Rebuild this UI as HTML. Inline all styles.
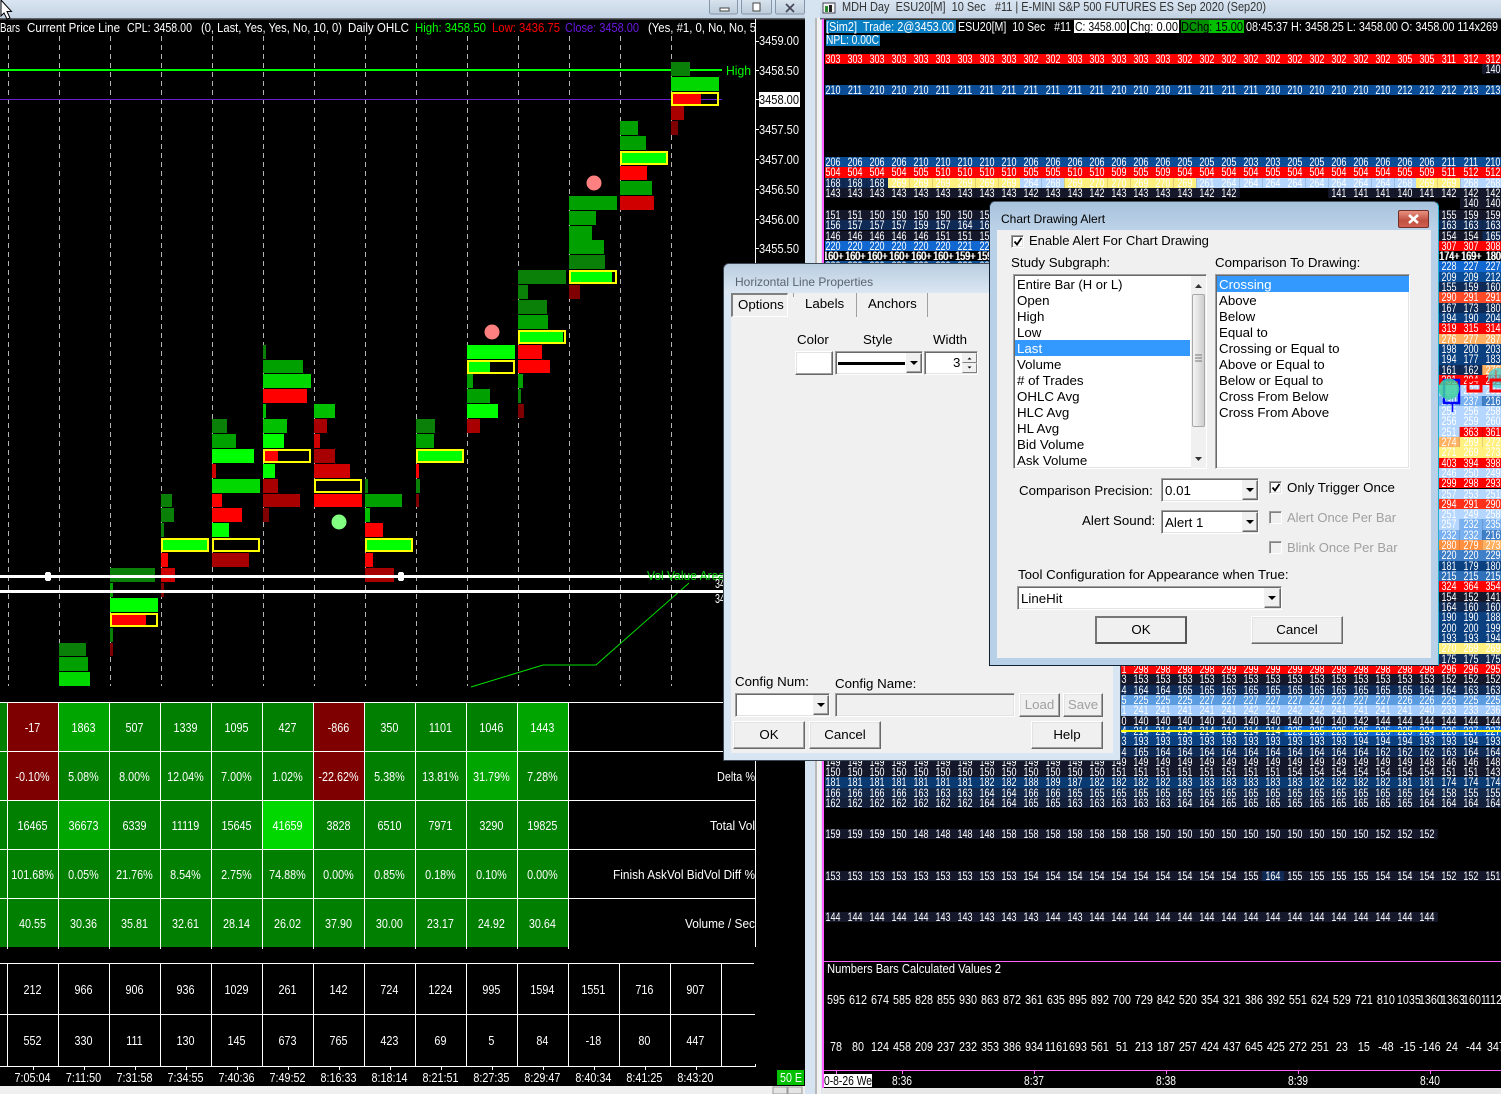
<!DOCTYPE html>
<html><head><meta charset="utf-8"><title>Chart</title>
<style>
html,body{margin:0;padding:0;background:#000}
body{position:relative;width:1501px;height:1094px;overflow:hidden;font-family:"Liberation Sans",sans-serif;color:#000}
div,svg{position:absolute}
svg.a{left:0;top:0}
svg text{font-family:"Liberation Sans",sans-serif;font-size:13px;fill:#fff;white-space:pre}
.r{display:flex;height:10.32px;line-height:11px;font-size:12px;white-space:nowrap;transform:scaleX(.75);transform-origin:0 0;color:#fff}
.r b{font-weight:400;flex:none;width:29.33px;text-align:center}
.n{background:#14182a}.m{background:#0f2a55}.u{background:#0a3f80}.e{background:#0a4d96}.f{background:#1068d0}
.R{background:#ff0000}.p{background:#ff4a28}.o{background:#ffb060}.O{background:#ff9040}.y{background:#fff080}.l{background:#b4d6ff}.s{background:#78b0f0}.w{background:#4080c8}.t7{background:#3070b8}.k{background:#000;text-shadow:1px 0 #fff}
.g{display:flex;transform:scaleX(.83);transform-origin:0 0;color:#fff;font-size:13px;line-height:14px;white-space:nowrap}
.g b{font-weight:400;flex:none;width:61.45px;text-align:center}
.h{display:flex;transform:scaleX(.83);transform-origin:0 0;color:#fff;font-size:13px;line-height:14px;white-space:nowrap}
.h b{font-weight:400;flex:none;width:26.5px;text-align:center}
.t{white-space:nowrap;font-size:13.3px;line-height:16px;color:#000;margin-top:1px}
.d{color:#a0a0a0}
.b{background:#f0f0f0;border:1px solid;border-color:#fff #696969 #696969 #fff;box-shadow:inset -1px -1px 0 #a0a0a0,inset 1px 1px 0 #e3e3e3;box-sizing:border-box;text-align:center;font-size:13.3px;line-height:26px}
.i{background:#fff;box-sizing:border-box;border:1px solid;border-color:#a0a0a0 #fff #fff #a0a0a0;box-shadow:inset 1px 1px 0 #696969,inset -1px -1px 0 #e3e3e3}
.c{background:#f0f0f0;box-sizing:border-box;border:1px solid;border-color:#f0f0f0 #696969 #696969 #f0f0f0;box-shadow:inset -1px -1px 0 #a0a0a0}
.c:after{content:"";position:absolute;left:3px;top:7px;border:4px solid transparent;border-top:4px solid #000;border-bottom:0}
.sp{background:#f0f0f0;box-sizing:border-box;border:1px solid;border-color:#f0f0f0 #808080 #808080 #f0f0f0}
</style></head><body>

<svg class="a" width="1501" height="1094" shape-rendering="crispEdges">
<defs>
<linearGradient id="tb" x1="0" y1="0" x2="0" y2="1"><stop offset="0" stop-color="#d9e5f1"/><stop offset="1" stop-color="#c3d3e3"/></linearGradient>
<linearGradient id="wb" x1="0" y1="0" x2="0" y2="1"><stop offset="0" stop-color="#dbe6f0"/><stop offset="1" stop-color="#bccbda"/></linearGradient>
</defs>
<rect x="0" y="0" width="820" height="18" fill="url(#tb)"/>
<rect x="0" y="18" width="805" height="1.5" fill="#606468"/>
<rect x="805" y="0" width="18" height="1094" fill="#d6e3f0"/>
<rect x="815" y="18" width="2" height="1076" fill="#b8b8b8"/>
<rect x="817" y="18" width="4" height="1076" fill="#f2f2f2"/>
<rect x="820" y="0" width="681" height="18" fill="url(#tb)"/>
<rect x="820" y="18" width="681" height="1.5" fill="#606468"/>
<rect x="709.5" y="-2" width="28" height="16" rx="2" fill="url(#wb)" stroke="#8496aa"/>
<rect x="741.5" y="-2" width="30" height="16" rx="2" fill="url(#wb)" stroke="#8496aa"/>
<rect x="775.5" y="-2" width="29" height="16" rx="2" fill="url(#wb)" stroke="#8496aa"/>
<rect x="720" y="8" width="9" height="3" fill="#fff" stroke="#444"/>
<rect x="753" y="3" width="7" height="8" fill="#fff" stroke="#444"/>
<path d="M786 4l8 8M794 4l-8 8" stroke="#445" stroke-width="1.6" shape-rendering="auto"/>
<rect x="823" y="3" width="12" height="10" fill="#f4f4f4" stroke="#445"/>
<rect x="825" y="6" width="3" height="6" fill="#2a8a2a"/><rect x="829" y="5" width="3" height="7" fill="#222"/>
<path stroke="#b4b4b4" stroke-dasharray="5 4" fill="none" d="M8.5 36V686M59.5 36V686M110.5 36V686M161.5 36V686M212.5 36V686M263.5 36V686M314.5 36V686M365.5 36V686M416.5 36V686M467.5 36V686M518.5 36V686M569.5 36V686M620.5 36V686M671.5 36V686"/>
<rect x="0" y="69" width="722" height="2" fill="#00ff00"/>
<rect x="0" y="99" width="722" height="1" fill="#6a20d0"/>
<path fill="#0a8008" d="M671 62h19v14h-19zM518 270h48v14h-48zM518 285h10v14h-10zM518 300h29v14h-29zM212 419h15v14h-15zM416 419h19v14h-19zM161 494h11v13h-11zM161 508h13v14h-13zM161 523h3v14h-3zM263 345h3v14h-3zM365 479h3v14h-3zM416 479h4v14h-4zM518 389h3v14h-3zM110 628h3v14h-3zM59 643h27v13h-27zM569 255h36v14h-36zM110 568h45v14h-45z"/>
<path fill="#00a000" d="M620 121h18v14h-18zM620 136h26v14h-26zM620 181h32v14h-32zM569 196h48v14h-48zM569 211h27v14h-27zM569 226h23v14h-23zM569 240h35v14h-35zM518 315h30v14h-30zM467 374h6v14h-6zM467 389h23v14h-23zM416 434h18v14h-18zM212 434h24v14h-24zM263 360h40v13h-40zM518 374h5v14h-5zM110 583h3v14h-3zM59 657h29v14h-29zM365 494h37v13h-37z"/>
<path fill="#00c000" d="M314 404h21v14h-21zM263 419h24v14h-24zM365 508h5v14h-5zM263 404h3v14h-3z"/>
<path fill="#00d800" d="M671 77h48v14h-48zM263 374h48v14h-48zM212 479h48v14h-48zM59 672h31v14h-31z"/>
<path fill="#00ff00" d="M467 345h48v14h-48zM467 404h31v14h-31zM263 434h21v14h-21zM212 449h42v14h-42zM263 464h12v14h-12zM212 523h17v14h-17zM110 598h48v14h-48z"/>
<path fill="#ff0000" d="M620 166h27v14h-27zM518 345h24v14h-24zM518 360h32v13h-32zM263 389h44v14h-44zM212 494h10v13h-10zM212 508h30v14h-30zM365 523h18v14h-18zM365 553h8v14h-8zM161 553h7v14h-7zM416 464h3v14h-3zM314 494h48v13h-48z"/>
<path fill="#d00000" d="M620 196h34v14h-34zM212 464h4v14h-4zM314 434h6v14h-6zM161 568h14v14h-14zM314 464h36v14h-36z"/>
<path fill="#a80000" d="M671 106h13v14h-13zM467 419h13v14h-13zM314 419h13v14h-13zM314 449h21v14h-21zM263 479h15v14h-15zM263 494h37v13h-37zM212 553h37v14h-37zM365 568h29v14h-29z"/>
<path fill="#7f0000" d="M671 121h7v14h-7zM569 285h11v14h-11zM518 404h6v14h-6zM416 494h3v13h-3zM263 508h6v14h-6zM161 583h3v14h-3zM110 643h3v13h-3z"/>
<path fill="#ff0000" d="M672 93h29v12h-29zM264 450h14v12h-14zM111 614h35v12h-35z"/>
<path fill="#00ff00" d="M621 152h46v12h-46zM570 271h42v12h-42zM519 331h44v12h-44zM468 361h22v12h-22zM417 450h46v12h-46zM366 539h46v12h-46zM162 539h46v12h-46z"/>
<g fill="none" stroke="#ffff00" stroke-width="2">
<rect x="672" y="93" width="46" height="12"/><rect x="621" y="152" width="46" height="12"/><rect x="570" y="271" width="46" height="12"/><rect x="519" y="331" width="46" height="12"/><rect x="468" y="361" width="46" height="12"/><rect x="417" y="450" width="46" height="12"/><rect x="366" y="539" width="46" height="12"/><rect x="315" y="480" width="46" height="12"/><rect x="264" y="450" width="46" height="12"/><rect x="213" y="539" width="46" height="12"/><rect x="162" y="539" width="46" height="12"/><rect x="111" y="614" width="46" height="12"/>
</g>
<g shape-rendering="auto">
<ellipse cx="594" cy="183" rx="7.5" ry="7.5" fill="#ff8080"/>
<ellipse cx="492" cy="332" rx="7.5" ry="7.5" fill="#ff8080"/>
<ellipse cx="339" cy="522" rx="7.5" ry="7.5" fill="#80ff80"/>
<polyline points="471,687 543,665 596,665 689,583" fill="none" stroke="#00e000" stroke-width="1"/>
</g>
<rect x="0" y="575" width="724" height="3" fill="#fff"/>
<rect x="0" y="590" width="724" height="3" fill="#fff"/>
<rect x="45" y="572" width="6" height="9" rx="2" fill="#fff"/>
<rect x="398" y="572" width="6" height="9" rx="2" fill="#fff"/>
<rect x="755" y="19" width="1" height="928" fill="#fff"/>
<path stroke="#fff" d="M756 41.5h3M756 70.5h3M756 99.5h3M756 129.5h3M756 159.5h3M756 189.5h3M756 219.5h3M756 248.5h3"/>
<rect x="759" y="92" width="41" height="15" fill="#fff"/>
<rect x="0" y="702" width="569" height="245" fill="#007f00"/>
<path fill="#7f0000" d="M8 703h50v48h-50zM314 703h50v48h-50zM8 752h50v48h-50zM314 752h50v48h-50z"/>
<path fill="#00a500" d="M59 703h50v48h-50zM518 703h50v48h-50zM467 752h50v48h-50zM59 801h50v48h-50z"/>
<path fill="#00d800" d="M263 801h50v48h-50z"/>
<path stroke="#fff" fill="none" d="M7.5 702V949M58.5 702V949M109.5 702V949M160.5 702V949M211.5 702V949M262.5 702V949M313.5 702V949M364.5 702V949M415.5 702V949M466.5 702V949M517.5 702V949M568.5 702V949M0 702.5H755M0 751.5H755M0 800.5H755M0 849.5H755M0 898.5H755"/>
<path stroke="#fff" fill="none" d="M7.5 963V1066M58.5 963V1066M109.5 963V1066M160.5 963V1066M211.5 963V1066M262.5 963V1066M313.5 963V1066M364.5 963V1066M415.5 963V1066M466.5 963V1066M517.5 963V1066M568.5 963V1066M619.5 963V1066M670.5 963V1066M721.5 963V1066M0 963.5H754M0 1014.5H755M0 1066.5H756M755.5 1064V1067M33.5 1067V1070M84.5 1067V1070M135.5 1067V1070M186.5 1067V1070M237.5 1067V1070M288.5 1067V1070M339.5 1067V1070M390.5 1067V1070M441.5 1067V1070M492.5 1067V1070M543.5 1067V1070M594.5 1067V1070M645.5 1067V1070M696.5 1067V1070"/>
<rect x="777" y="1070" width="27" height="15" fill="#00c000"/>
<rect x="0" y="1086" width="805" height="8" fill="#f0f0f0"/>
<rect x="773" y="1087" width="14" height="7" fill="#e4e4e4" stroke="#999"/><rect x="788" y="1087" width="14" height="7" fill="#e4e4e4" stroke="#999"/>
<rect x="822" y="19" width="2" height="1069" fill="#ff60ff"/>
<rect x="824" y="961" width="677" height="1" fill="#ff60ff"/>
<rect x="824" y="1070" width="677" height="1" fill="#ff60ff"/>
<path stroke="#ff60ff" d="M836.5 1071v3M902.5 1071v3M1034.5 1071v3M1166.5 1071v3M1298.5 1071v3M1430.5 1071v3"/>
<rect x="824" y="1074" width="48" height="13" fill="#fff"/>
<rect x="822" y="1088" width="679" height="6" fill="#e8e8e8"/>
<g shape-rendering="auto">
<text x="0" y="32" textLength="20" lengthAdjust="spacingAndGlyphs">Bars</text>
<text x="27" y="32" textLength="93" lengthAdjust="spacingAndGlyphs">Current Price Line</text>
<text x="127" y="32" textLength="65" lengthAdjust="spacingAndGlyphs">CPL: 3458.00</text>
<text x="201" y="32" textLength="141" lengthAdjust="spacingAndGlyphs">(0, Last, Yes, Yes, No, 10, 0)</text>
<text x="348" y="32" textLength="61" lengthAdjust="spacingAndGlyphs">Daily OHLC</text>
<text x="415" y="32" textLength="71" lengthAdjust="spacingAndGlyphs" style="fill:#00ff00">High: 3458.50</text>
<text x="492" y="32" textLength="68" lengthAdjust="spacingAndGlyphs" style="fill:#ff0000">Low: 3436.75</text>
<text x="565" y="32" textLength="74" lengthAdjust="spacingAndGlyphs" style="fill:#6a18e0">Close: 3458.00</text>
<text x="648" y="32" textLength="108" lengthAdjust="spacingAndGlyphs">(Yes, #1, 0, No, No, 5</text>
<text x="726" y="75" textLength="25" lengthAdjust="spacingAndGlyphs" style="fill:#00ff00">High</text>
<text x="759" y="45" textLength="40" lengthAdjust="spacingAndGlyphs">3459.00</text>
<text x="759" y="75" textLength="40" lengthAdjust="spacingAndGlyphs">3458.50</text>
<text x="759" y="104" textLength="40" lengthAdjust="spacingAndGlyphs" style="fill:#000">3458.00</text>
<text x="759" y="134" textLength="40" lengthAdjust="spacingAndGlyphs">3457.50</text>
<text x="759" y="164" textLength="40" lengthAdjust="spacingAndGlyphs">3457.00</text>
<text x="759" y="194" textLength="40" lengthAdjust="spacingAndGlyphs">3456.50</text>
<text x="759" y="224" textLength="40" lengthAdjust="spacingAndGlyphs">3456.00</text>
<text x="759" y="253" textLength="40" lengthAdjust="spacingAndGlyphs">3455.50</text>
<text x="647" y="580" textLength="78" lengthAdjust="spacingAndGlyphs" style="fill:#00d000">Vol Value Area</text>
<text x="715" y="588" textLength="10" lengthAdjust="spacingAndGlyphs">34</text>
<text x="715" y="603" textLength="10" lengthAdjust="spacingAndGlyphs">34</text>
<text x="717" y="781" textLength="38" lengthAdjust="spacingAndGlyphs">Delta %</text>
<text x="710" y="830" textLength="45" lengthAdjust="spacingAndGlyphs">Total Vol</text>
<text x="613" y="879" textLength="142" lengthAdjust="spacingAndGlyphs">Finish AskVol BidVol Diff %</text>
<text x="685" y="928" textLength="70" lengthAdjust="spacingAndGlyphs">Volume / Sec</text>
<text x="780" y="1082" textLength="22" lengthAdjust="spacingAndGlyphs">50 E</text>
<text x="827" y="973" textLength="174" lengthAdjust="spacingAndGlyphs">Numbers Bars Calculated Values 2</text>
<text x="824" y="1085" textLength="48" lengthAdjust="spacingAndGlyphs" style="fill:#000">0-8-26 We</text>
<text x="892" y="1085" textLength="20" lengthAdjust="spacingAndGlyphs">8:36</text>
<text x="1024" y="1085" textLength="20" lengthAdjust="spacingAndGlyphs">8:37</text>
<text x="1156" y="1085" textLength="20" lengthAdjust="spacingAndGlyphs">8:38</text>
<text x="1288" y="1085" textLength="20" lengthAdjust="spacingAndGlyphs">8:39</text>
<text x="1420" y="1085" textLength="20" lengthAdjust="spacingAndGlyphs">8:40</text>
<text x="842" y="11" textLength="424" lengthAdjust="spacingAndGlyphs" style="fill:#333">MDH Day  ESU20[M]  10 Sec   #11 | E-MINI S&amp;P 500 FUTURES ES Sep 2020 (Sep20)</text>
</g>
<rect x="826" y="20" width="130" height="13" fill="#0a7fc4"/>
<rect x="826" y="35" width="54" height="11" fill="#0a7fc4"/>
<rect x="1074" y="20" width="53" height="13" fill="#fff"/>
<rect x="1129" y="20" width="50" height="13" fill="#fff"/>
<rect x="1181" y="20" width="28" height="13" fill="#009000"/>
<rect x="1209" y="20" width="35" height="13" fill="#00c000"/>
<g shape-rendering="auto">
<text x="826" y="31" textLength="128" lengthAdjust="spacingAndGlyphs">[Sim2]  Trade: 2@3453.00</text>
<text x="958" y="31" textLength="113" lengthAdjust="spacingAndGlyphs">ESU20[M]  10 Sec   #11</text>
<text x="1075" y="31" textLength="51" lengthAdjust="spacingAndGlyphs" style="fill:#000">C: 3458.00</text>
<text x="1130" y="31" textLength="48" lengthAdjust="spacingAndGlyphs" style="fill:#000">Chg: 0.00</text>
<text x="1181" y="31" textLength="62" lengthAdjust="spacingAndGlyphs" style="fill:#000">DChg: 15.00</text>
<text x="1246" y="31" textLength="252" lengthAdjust="spacingAndGlyphs">08:45:37 H: 3458.25 L: 3458.00 O: 3458.00 114x269</text>
<text x="826" y="44" textLength="53" lengthAdjust="spacingAndGlyphs">NPL: 0.00C</text>
</g>
</svg>

<!-- table 1 text -->
<div class="g" style="left:7px;top:721px"><b>-17</b><b>1863</b><b>507</b><b>1339</b><b>1095</b><b>427</b><b>-866</b><b>350</b><b>1101</b><b>1046</b><b>1443</b></div>
<div class="g" style="left:7px;top:770px"><b>-0.10%</b><b>5.08%</b><b>8.00%</b><b>12.04%</b><b>7.00%</b><b>1.02%</b><b>-22.62%</b><b>5.38%</b><b>13.81%</b><b>31.79%</b><b>7.28%</b></div>
<div class="g" style="left:7px;top:819px"><b>16465</b><b>36673</b><b>6339</b><b>11119</b><b>15645</b><b>41659</b><b>3828</b><b>6510</b><b>7971</b><b>3290</b><b>19825</b></div>
<div class="g" style="left:7px;top:868px"><b>101.68%</b><b>0.05%</b><b>21.76%</b><b>8.54%</b><b>2.75%</b><b>74.88%</b><b>0.00%</b><b>0.85%</b><b>0.18%</b><b>0.10%</b><b>0.00%</b></div>
<div class="g" style="left:7px;top:917px"><b>40.55</b><b>30.36</b><b>35.81</b><b>32.61</b><b>28.14</b><b>26.02</b><b>37.90</b><b>30.00</b><b>23.17</b><b>24.92</b><b>30.64</b></div>
<!-- table 2 text -->
<div class="g" style="left:7px;top:983px"><b>212</b><b>966</b><b>906</b><b>936</b><b>1029</b><b>261</b><b>142</b><b>724</b><b>1224</b><b>995</b><b>1594</b><b>1551</b><b>716</b><b>907</b></div>
<div class="g" style="left:7px;top:1034px"><b>552</b><b>330</b><b>111</b><b>130</b><b>145</b><b>673</b><b>765</b><b>423</b><b>69</b><b>5</b><b>84</b><b>-18</b><b>80</b><b>447</b></div>
<div class="g" style="left:7px;top:1071px"><b>7:05:04</b><b>7:11:50</b><b>7:31:58</b><b>7:34:55</b><b>7:40:36</b><b>7:49:52</b><b>8:16:33</b><b>8:18:14</b><b>8:21:51</b><b>8:27:35</b><b>8:29:47</b><b>8:40:34</b><b>8:41:25</b><b>8:43:20</b></div>

<!-- right grid -->
<div style="left:825px;top:0;width:676px;height:1094px;overflow:hidden">
<div class="r R" style="left:-3px;top:53.5px"><b>303</b><b>303</b><b>303</b><b>303</b><b>303</b><b>303</b><b>303</b><b>303</b><b>303</b><b>302</b><b>302</b><b>303</b><b>303</b><b>303</b><b>303</b><b>303</b><b>302</b><b>302</b><b>302</b><b>302</b><b>302</b><b>302</b><b>302</b><b>302</b><b>302</b><b>302</b><b>305</b><b>305</b><b>311</b><b>312</b><b>312</b></div>
<div class="r n" style="left:657px;top:64px"><b>140</b></div>
<div class="r e" style="left:-3px;top:84.5px"><b>210</b><b>211</b><b>210</b><b>210</b><b>210</b><b>211</b><b>211</b><b>211</b><b>211</b><b>211</b><b>211</b><b>211</b><b>211</b><b>210</b><b>210</b><b>210</b><b>211</b><b>211</b><b>211</b><b>211</b><b>210</b><b>210</b><b>210</b><b>210</b><b>210</b><b>210</b><b>212</b><b>212</b><b>212</b><b>213</b><b>213</b></div>
<div class="r e" style="left:-3px;top:157px"><b>206</b><b>206</b><b>206</b><b>206</b><b>210</b><b>210</b><b>210</b><b>210</b><b>210</b><b>206</b><b>206</b><b>206</b><b>206</b><b>206</b><b>206</b><b>206</b><b>205</b><b>205</b><b>205</b><b>203</b><b>203</b><b>205</b><b>205</b><b>206</b><b>206</b><b>206</b><b>206</b><b>206</b><b>211</b><b>211</b><b>210</b></div>
<div class="r R" style="left:-3px;top:167.3px"><b>504</b><b>504</b><b>504</b><b>504</b><b>505</b><b>510</b><b>510</b><b>510</b><b>510</b><b>505</b><b>505</b><b>510</b><b>510</b><b>509</b><b>505</b><b>509</b><b>504</b><b>504</b><b>504</b><b>504</b><b>505</b><b>504</b><b>504</b><b>504</b><b>504</b><b>504</b><b>505</b><b>509</b><b>511</b><b>512</b><b>512</b></div>
<div class="r" style="left:-3px;top:177.6px"><b class="m">168</b><b class="m">168</b><b class="m">168</b><b class="y">269</b><b class="y">269</b><b class="y">269</b><b class="y">269</b><b class="y">269</b><b class="y">269</b><b class="l">264</b><b class="l">268</b><b class="y">269</b><b class="y">270</b><b class="y">270</b><b class="y">269</b><b class="y">270</b><b class="y">269</b><b class="l">261</b><b class="l">264</b><b class="l">264</b><b class="l">264</b><b class="l">264</b><b class="l">264</b><b class="l">264</b><b class="l">264</b><b class="l">264</b><b class="l">268</b><b class="y">269</b><b class="y">269</b><b class="l">268</b><b class="l">268</b></div>
<div class="r" style="left:-3px;top:187.9px"><b class="n">143</b><b class="n">143</b><b class="n">143</b><b class="n">143</b><b class="n">143</b><b class="n">143</b><b class="n">143</b><b class="n">143</b><b class="n">143</b><b class="n">142</b><b class="n">143</b><b class="n">143</b><b class="n">142</b><b class="n">143</b><b class="n">143</b><b class="n">143</b><b class="n">143</b><b class="n">142</b><b class="n">142</b><b></b><b></b><b></b><b></b><b class="n">141</b><b class="n">141</b><b class="n">141</b><b class="n">140</b><b class="n">141</b><b class="n">142</b><b class="n">142</b><b class="n">142</b></div>
<div class="r n" style="left:635px;top:198.2px"><b>140</b><b>140</b></div>

<div class="r n" style="left:-3px;top:209.8px"><b>151</b><b>151</b><b>150</b><b>150</b><b>150</b><b>150</b><b>150</b><b>151</b></div>
<div class="r m" style="left:-3px;top:220.1px"><b>156</b><b>157</b><b>157</b><b>157</b><b>159</b><b>157</b><b>164</b><b>164</b></div>
<div class="r n" style="left:-3px;top:230.5px"><b>146</b><b>146</b><b>146</b><b>146</b><b>146</b><b>151</b><b>151</b><b>154</b></div>
<div class="r f" style="left:-3px;top:240.8px"><b>220</b><b>220</b><b>220</b><b>220</b><b>220</b><b>220</b><b>221</b><b>221</b></div>
<div class="r k" style="left:-3px;top:251.1px"><b>160+</b><b>160+</b><b>160+</b><b>160+</b><b>160+</b><b>160+</b><b>159+</b><b>159+</b></div>
<div class="r e" style="left:-3px;top:261.4px"><b>220</b><b>220</b><b>220</b><b>220</b><b>220</b><b>220</b><b>220</b><b>220</b></div>

<div class="r" style="left:613px;top:209.8px"><b class="n">155</b><b class="n">159</b><b class="n">159</b></div>
<div class="r" style="left:613px;top:220.1px"><b class="m">163</b><b class="m">163</b><b class="m">163</b></div>
<div class="r" style="left:613px;top:230.5px"><b class="n">154</b><b class="n">154</b><b class="m">165</b></div>
<div class="r R" style="left:613px;top:240.8px"><b>307</b><b>307</b><b>308</b></div>
<div class="r k" style="left:613px;top:251.1px"><b>174+</b><b>169+</b><b>180</b></div>
<div class="r f" style="left:613px;top:261.4px"><b>228</b><b>227</b><b>227</b></div>
<div class="r e" style="left:613px;top:271.7px"><b>209</b><b>209</b><b>212</b></div>
<div class="r m" style="left:613px;top:282.1px"><b>155</b><b>159</b><b>160</b></div>
<div class="r p" style="left:613px;top:292.4px"><b>290</b><b>291</b><b>291</b></div>
<div class="r m" style="left:613px;top:302.7px"><b>167</b><b>173</b><b>180</b></div>
<div class="r u" style="left:613px;top:313px"><b>194</b><b>190</b><b>204</b></div>
<div class="r R" style="left:613px;top:323.3px"><b>319</b><b>315</b><b>314</b></div>
<div class="r o" style="left:613px;top:333.7px"><b>276</b><b>277</b><b>287</b></div>
<div class="r u" style="left:613px;top:344px"><b>198</b><b>200</b><b>203</b></div>
<div class="r u" style="left:613px;top:354.3px"><b>194</b><b>177</b><b>183</b></div>
<div class="r" style="left:613px;top:364.6px"><b class="m">161</b><b class="m">162</b><b class="o">276</b></div>
<div class="r R" style="left:613px;top:375px"><b>301</b><b>294</b><b>291</b></div>
<div class="r l" style="left:613px;top:385.3px"><b>189</b><b>233</b><b>231</b></div>
<div class="r" style="left:613px;top:395.6px"><b class="s">230</b><b class="s">237</b><b class="w">216</b></div>
<div class="r l" style="left:613px;top:405.9px"><b>255</b><b>256</b><b>258</b></div>
<div class="r l" style="left:613px;top:416.2px"><b>256</b><b>259</b><b>260</b></div>
<div class="r" style="left:613px;top:426.5px"><b class="l">251</b><b class="R">363</b><b class="R">361</b></div>
<div class="r" style="left:613px;top:436.9px"><b class="o">274</b><b class="y">269</b><b class="y">272</b></div>
<div class="r y" style="left:613px;top:447.2px"><b>271</b><b>269</b><b>273</b></div>
<div class="r R" style="left:613px;top:457.5px"><b>403</b><b>394</b><b>398</b></div>
<div class="r l" style="left:613px;top:467.8px"><b>246</b><b>250</b><b>249</b></div>
<div class="r R" style="left:613px;top:478.1px"><b>299</b><b>298</b><b>293</b></div>
<div class="r l" style="left:613px;top:488.5px"><b>257</b><b>253</b><b>251</b></div>
<div class="r" style="left:613px;top:498.8px;background:#ff3018"><b>294</b><b>291</b><b>290</b></div>
<div class="r l" style="left:613px;top:509.1px"><b>251</b><b>249</b><b>258</b></div>
<div class="r" style="left:613px;top:519.4px"><b class="l">257</b><b class="s">232</b><b class="s">235</b></div>
<div class="r" style="left:613px;top:529.7px"><b class="s">232</b><b class="s">232</b><b class="w">216</b></div>
<div class="r" style="left:613px;top:540.1px"><b class="O">280</b><b class="O">279</b><b class="o">273</b></div>
<div class="r w" style="left:613px;top:550.4px"><b>220</b><b>220</b><b>229</b></div>
<div class="r u" style="left:613px;top:560.7px"><b>181</b><b>179</b><b>180</b></div>
<div class="r t7" style="left:613px;top:571px"><b>215</b><b>215</b><b>215</b></div>
<div class="r R" style="left:613px;top:581.3px"><b>324</b><b>364</b><b>354</b></div>
<div class="r n" style="left:613px;top:591.7px"><b>154</b><b>152</b><b>141</b></div>
<div class="r m" style="left:613px;top:602px"><b>164</b><b>160</b><b>160</b></div>
<div class="r u" style="left:613px;top:612.3px"><b>190</b><b>190</b><b>188</b></div>
<div class="r u" style="left:613px;top:622.6px"><b>200</b><b>200</b><b>199</b></div>
<div class="r u" style="left:613px;top:632.9px"><b>193</b><b>193</b><b>194</b></div>
<div class="r y" style="left:613px;top:643.3px"><b>270</b><b>269</b><b>269</b></div>
<div class="r m" style="left:613px;top:653.6px"><b>175</b><b>175</b><b>175</b></div>

<div class="r R" style="left:283px;top:663.9px"><b>291</b><b>298</b><b>298</b><b>298</b><b>298</b><b>299</b><b>299</b><b>299</b><b>299</b><b>298</b><b>298</b><b>298</b><b>298</b><b>298</b><b>298</b><b>296</b><b>296</b><b>295</b></div>
<div class="r n" style="left:283px;top:674.2px"><b>153</b><b>153</b><b>153</b><b>153</b><b>153</b><b>153</b><b>153</b><b>153</b><b>153</b><b>153</b><b>153</b><b>153</b><b>153</b><b>153</b><b>153</b><b>152</b><b>152</b><b>152</b></div>
<div class="r m" style="left:283px;top:684.5px"><b>164</b><b>164</b><b>164</b><b>165</b><b>165</b><b>165</b><b>165</b><b>165</b><b>165</b><b>165</b><b>165</b><b>165</b><b>165</b><b>165</b><b>164</b><b>164</b><b>163</b><b>163</b></div>
<div class="r" style="left:283px;top:694.9px;background:#5b9be0"><b>225</b><b>225</b><b>225</b><b>225</b><b>227</b><b>227</b><b>227</b><b>227</b><b>227</b><b>227</b><b>227</b><b>227</b><b>227</b><b>226</b><b>226</b><b>226</b><b>225</b><b>225</b></div>
<div class="r" style="left:283px;top:705.2px;background:#a4ccff"><b>241</b><b>241</b><b>241</b><b>241</b><b>241</b><b>241</b><b>242</b><b>242</b><b>242</b><b>242</b><b>241</b><b>241</b><b>241</b><b>241</b><b>240</b><b>233</b><b>233</b><b>236</b></div>
<div class="r n" style="left:283px;top:715.5px"><b>140</b><b>140</b><b>140</b><b>140</b><b>140</b><b>140</b><b>140</b><b>140</b><b>140</b><b>140</b><b>140</b><b>142</b><b>144</b><b>144</b><b>144</b><b>144</b><b>144</b><b>144</b></div>
<div class="r" style="left:283px;top:725.8px"><b class="e">214</b><b class="e">214</b><b class="e">214</b><b class="e">214</b><b class="e">214</b><b class="e">214</b><b class="e">214</b><b class="e">214</b><b class="f">225</b><b class="f">225</b><b class="f">225</b><b class="f">225</b><b class="f">225</b><b class="f">225</b><b class="f">224</b><b class="f">226</b><b class="f">227</b><b class="f">227</b></div>
<div class="r u" style="left:283px;top:736.1px"><b>193</b><b>193</b><b>193</b><b>193</b><b>193</b><b>193</b><b>193</b><b>193</b><b>193</b><b>193</b><b>193</b><b>194</b><b>194</b><b>194</b><b>193</b><b>193</b><b>194</b><b>193</b></div>
<div class="r m" style="left:283px;top:746.5px"><b>164</b><b>165</b><b>164</b><b>164</b><b>164</b><b>164</b><b>164</b><b>164</b><b>164</b><b>164</b><b>164</b><b>164</b><b>162</b><b>162</b><b>162</b><b>163</b><b>164</b><b>164</b></div>
<div class="r n" style="left:-3px;top:756.8px"><b>149</b><b>149</b><b>149</b><b>149</b><b>149</b><b>149</b><b>149</b><b>149</b><b>149</b><b>149</b><b>149</b><b>149</b><b>149</b><b>149</b><b>149</b><b>149</b><b>149</b><b>149</b><b>149</b><b>149</b><b>149</b><b>149</b><b>149</b><b>149</b><b>149</b><b>149</b><b>149</b><b>148</b><b>146</b><b>146</b><b>148</b></div>
<div class="r n" style="left:-3px;top:767.1px"><b>150</b><b>150</b><b>150</b><b>150</b><b>150</b><b>150</b><b>150</b><b>150</b><b>150</b><b>150</b><b>150</b><b>150</b><b>150</b><b>151</b><b>151</b><b>151</b><b>151</b><b>151</b><b>151</b><b>151</b><b>151</b><b>154</b><b>154</b><b>154</b><b>154</b><b>154</b><b>154</b><b>154</b><b>151</b><b>151</b><b>143</b></div>
<div class="r" style="left:-3px;top:777.4px;background:#0a3a72"><b>181</b><b>181</b><b>181</b><b>181</b><b>181</b><b>181</b><b>181</b><b>182</b><b>182</b><b>188</b><b>189</b><b>187</b><b>182</b><b>182</b><b>182</b><b>182</b><b>183</b><b>183</b><b>183</b><b>183</b><b>183</b><b>183</b><b>182</b><b>182</b><b>182</b><b>182</b><b>181</b><b>181</b><b>174</b><b>174</b><b>174</b></div>
<div class="r" style="left:-3px;top:787.7px;background:#14284a"><b>166</b><b>166</b><b>166</b><b>166</b><b>163</b><b>163</b><b>163</b><b>164</b><b>164</b><b>166</b><b>166</b><b>165</b><b>165</b><b>165</b><b>165</b><b>165</b><b>165</b><b>165</b><b>165</b><b>165</b><b>165</b><b>165</b><b>165</b><b>165</b><b>165</b><b>165</b><b>165</b><b>164</b><b>158</b><b>155</b><b>155</b></div>
<div class="r" style="left:-3px;top:798.1px;background:#14203a"><b>162</b><b>162</b><b>162</b><b>162</b><b>162</b><b>162</b><b>162</b><b>164</b><b>164</b><b>165</b><b>165</b><b>163</b><b>163</b><b>163</b><b>163</b><b>163</b><b>164</b><b>164</b><b>165</b><b>165</b><b>165</b><b>165</b><b>165</b><b>165</b><b>165</b><b>165</b><b>165</b><b>164</b><b>164</b><b>164</b><b>164</b></div>
<div style="left:0;top:729.5px;width:676px;height:2.5px;background:#ffff00"></div>

<div class="r n" style="left:-3px;top:829px"><b>159</b><b>159</b><b>159</b><b>150</b><b>148</b><b>148</b><b>148</b><b>148</b><b>158</b><b>158</b><b>158</b><b>158</b><b>158</b><b>158</b><b>158</b><b>150</b><b>150</b><b>150</b><b>150</b><b>150</b><b>150</b><b>150</b><b>150</b><b>150</b><b>150</b><b>152</b><b>152</b><b>152</b></div>
<div class="r n" style="left:-3px;top:871px"><b>153</b><b>153</b><b>153</b><b>153</b><b>153</b><b>153</b><b>153</b><b>153</b><b>153</b><b>154</b><b>154</b><b>154</b><b>154</b><b>154</b><b>154</b><b>154</b><b>154</b><b>154</b><b>154</b><b>155</b><b class="m">164</b><b>155</b><b>155</b><b>155</b><b>155</b><b>154</b><b>154</b><b>154</b><b>152</b><b>152</b><b>151</b></div>
<div class="r n" style="left:-3px;top:912px"><b>144</b><b>144</b><b>144</b><b>144</b><b>144</b><b>143</b><b>143</b><b>143</b><b>143</b><b>143</b><b>144</b><b>143</b><b>144</b><b>144</b><b>144</b><b>144</b><b>144</b><b>144</b><b>144</b><b>144</b><b>144</b><b>144</b><b>144</b><b>144</b><b>144</b><b>144</b><b>144</b><b>144</b></div>

<div class="h" style="left:0;top:993px"><b>595</b><b>612</b><b>674</b><b>585</b><b>828</b><b>855</b><b>930</b><b>863</b><b>872</b><b>361</b><b>635</b><b>895</b><b>892</b><b>700</b><b>729</b><b>842</b><b>520</b><b>354</b><b>321</b><b>386</b><b>392</b><b>551</b><b>624</b><b>529</b><b>721</b><b>810</b><b>1035</b><b>1360</b><b>1363</b><b>1601</b><b>1120</b></div>
<div class="h" style="left:0;top:1040px"><b>78</b><b>80</b><b>124</b><b>458</b><b>209</b><b>237</b><b>232</b><b>353</b><b>386</b><b>934</b><b>1161</b><b>693</b><b>561</b><b>51</b><b>213</b><b>187</b><b>257</b><b>424</b><b>437</b><b>645</b><b>425</b><b>272</b><b>251</b><b>23</b><b>15</b><b>-48</b><b>-15</b><b>-146</b><b>24</b><b>-44</b><b>347</b></div>
</div>

<!-- overlay marks on right grid -->
<svg class="a" width="1501" height="1094">
<rect x="1444" y="380" width="15" height="23" fill="none" stroke="#0000ff" stroke-width="2.5"/>
<circle cx="1449" cy="389" r="10.5" fill="#40d0a0" opacity=".85"/>
<path d="M1452.5 403v9" stroke="#0000ff" stroke-width="1.5"/>
<rect x="1468" y="380" width="13" height="11" fill="none" stroke="#ff0000" stroke-width="3"/>
<circle cx="1498" cy="378" r="10" fill="#40d0d0" opacity=".75"/>
<rect x="1491" y="380" width="12" height="11" fill="none" stroke="#ff0000" stroke-width="3"/>
<path d="M1496 370v8" stroke="#e05040" stroke-width="1"/>
</svg>

<!-- cursor -->
<svg style="left:0;top:0" width="14" height="20"><path d="M1 0V16L4 13 7 19 10 18 7 11.5H11.5Z" fill="#fff" stroke="#000" stroke-width="1"/></svg>

<!-- Dialog 1 -->
<div style="left:723px;top:263px;width:398px;height:498px;box-sizing:border-box;border:1px solid #3a4654;border-radius:6px 6px 0 0;background:#d8e5f2"></div>
<div style="left:724px;top:264px;width:396px;height:29px;border-radius:5px 5px 0 0;background:linear-gradient(#b9cde0,#dbe7f2)"></div>
<div style="left:731px;top:293px;width:382px;height:460px;background:#f0f0f0"></div>
<div class="t" style="left:735px;top:274px;margin:0;font-size:12px;color:#5a6570">Horizontal Line Properties</div>
<div style="left:731px;top:293px;width:57px;height:24px;box-sizing:border-box;border:1px solid;border-width:2px 1px 1px 2px;border-color:#808080 #fff #fff #808080"></div>
<div style="left:793px;top:293px;width:1px;height:4px;background:#a0a0a0"></div>
<div style="left:856px;top:293px;width:1px;height:24px;background:#a0a0a0"></div>
<div style="left:927px;top:293px;width:1px;height:24px;background:#a0a0a0"></div>
<div class="t" style="left:738px;top:297px;margin:0">Options</div>
<div class="t" style="left:805px;top:296px;margin:0">Labels</div>
<div class="t" style="left:868px;top:296px;margin:0">Anchors</div>
<div class="t" style="left:797px;top:331px">Color</div>
<div class="t" style="left:863px;top:331px">Style</div>
<div class="t" style="left:933px;top:331px">Width</div>
<div class="b" style="left:795px;top:351px;width:38px;height:24px;background:#fff"></div>
<div class="i" style="left:835px;top:351px;width:88px;height:24px"></div>
<div style="left:838px;top:362px;width:67px;height:3px;background:#000"></div>
<div class="c" style="left:906px;top:353px;width:16px;height:20px"></div>
<div class="i" style="left:924px;top:351px;width:54px;height:24px"></div>
<div class="t" style="left:953px;top:354px">3</div>
<div class="sp" style="left:962px;top:353px;width:15px;height:10px"></div>
<div class="sp" style="left:962px;top:363px;width:15px;height:10px"></div>
<svg style="left:962px;top:353px" width="15" height="20"><path d="M5.5 6.5l2-2 2 2zM5.5 13.5l2 2 2-2z" fill="#000"/></svg>
<div class="t" style="left:735px;top:673px">Config Num:</div>
<div class="t" style="left:835px;top:675px">Config Name:</div>
<div class="i" style="left:735px;top:693px;width:95px;height:24px"></div>
<div class="c" style="left:813px;top:695px;width:16px;height:20px"></div>
<div class="i" style="left:835px;top:693px;width:180px;height:24px;background:#f0f0f0"></div>
<div class="b d" style="left:1019px;top:693px;width:41px;height:24px;line-height:22px">Load</div>
<div class="b d" style="left:1063px;top:693px;width:40px;height:24px;line-height:22px">Save</div>
<div class="b" style="left:733px;top:721px;width:72px;height:28px">OK</div>
<div class="b" style="left:809px;top:721px;width:72px;height:28px">Cancel</div>
<div class="b" style="left:1031px;top:721px;width:72px;height:28px">Help</div>

<!-- Dialog 2 -->
<div style="left:989px;top:201px;width:450px;height:465px;box-sizing:border-box;border:1px solid;border-color:#4a5a6a #20b0d0 #102030 #102030;border-radius:6px 6px 0 0;background:#b8d0e8"></div>
<div style="left:990px;top:202px;width:448px;height:28px;border-radius:5px 5px 0 0;background:linear-gradient(#a8c2dc,#bcd2e8)"></div>
<div style="left:997px;top:230px;width:434px;height:428px;background:#f0f0f0"></div>
<div class="t" style="left:1001px;top:211px;margin:0;font-size:12px">Chart Drawing Alert</div>
<div style="left:1398px;top:210px;width:31px;height:18px;box-sizing:border-box;border:1px solid #70302a;border-radius:2px;background:linear-gradient(#e89080,#c05040 60%,#d06050)"></div>
<svg style="left:1406px;top:213px" width="16" height="12"><path d="M3 2l9 8M12 2l-9 8" stroke="#fff" stroke-width="2.6"/></svg>

<div class="i" style="left:1011px;top:235px;width:13px;height:13px"></div>
<svg style="left:1012px;top:236px" width="12" height="12"><path d="M2.5 5.5l2.5 3 4.5-6.5" fill="none" stroke="#000" stroke-width="1.8"/></svg>
<div class="t" style="left:1029px;top:233px;margin:0;font-size:13px">Enable Alert For Chart Drawing</div>
<div class="t" style="left:1011px;top:254px">Study Subgraph:</div>
<div class="t" style="left:1215px;top:254px">Comparison To Drawing:</div>

<div class="i" style="left:1013px;top:274px;width:194px;height:195px"></div>
<div style="left:1015px;top:340px;width:175px;height:16px;background:#3399ff"></div>
<div class="t" style="left:1017px;top:276px;font-size:13px">Entire Bar (H or L)</div>
<div class="t" style="left:1017px;top:292px">Open</div>
<div class="t" style="left:1017px;top:308px">High</div>
<div class="t" style="left:1017px;top:324px">Low</div>
<div class="t" style="left:1017px;top:340px;color:#fff">Last</div>
<div class="t" style="left:1017px;top:356px">Volume</div>
<div class="t" style="left:1017px;top:372px"># of Trades</div>
<div class="t" style="left:1017px;top:388px">OHLC Avg</div>
<div class="t" style="left:1017px;top:404px">HLC Avg</div>
<div class="t" style="left:1017px;top:420px">HL Avg</div>
<div class="t" style="left:1017px;top:436px">Bid Volume</div>
<div class="t" style="left:1017px;top:452px">Ask Volume</div>
<div style="left:1191px;top:276px;width:15px;height:192px;background:#f0f0f0"></div>
<div style="left:1192px;top:294px;width:13px;height:133px;box-sizing:border-box;border:1px solid #a8a8a8;border-radius:2px;background:linear-gradient(90deg,#f4f4f4,#cfcfcf)"></div>
<svg style="left:1191px;top:276px" width="15" height="192"><path d="M4 12l3.5-4 3.5 4zM4 181l3.5 4 3.5-4z" fill="#333"/><path d="M4 79h7M4 82h7M4 85h7" stroke="#777"/></svg>

<div class="i" style="left:1215px;top:274px;width:195px;height:195px"></div>
<div style="left:1217px;top:276px;width:192px;height:16px;background:#3399ff"></div>
<div class="t" style="left:1219px;top:276px;color:#fff">Crossing</div>
<div class="t" style="left:1219px;top:292px">Above</div>
<div class="t" style="left:1219px;top:308px">Below</div>
<div class="t" style="left:1219px;top:324px">Equal to</div>
<div class="t" style="left:1219px;top:340px">Crossing or Equal to</div>
<div class="t" style="left:1219px;top:356px">Above or Equal to</div>
<div class="t" style="left:1219px;top:372px">Below or Equal to</div>
<div class="t" style="left:1219px;top:388px">Cross From Below</div>
<div class="t" style="left:1219px;top:404px">Cross From Above</div>

<div class="t" style="left:1019px;top:482px">Comparison Precision:</div>
<div class="i" style="left:1161px;top:478px;width:98px;height:24px"></div>
<div class="t" style="left:1165px;top:482px">0.01</div>
<div class="c" style="left:1242px;top:480px;width:16px;height:20px"></div>
<div class="t" style="left:1082px;top:512px">Alert Sound:</div>
<div class="i" style="left:1161px;top:510px;width:98px;height:24px"></div>
<div class="t" style="left:1165px;top:514px">Alert 1</div>
<div class="c" style="left:1242px;top:512px;width:16px;height:20px"></div>

<div class="i" style="left:1269px;top:481px;width:13px;height:13px"></div>
<svg style="left:1270px;top:482px" width="12" height="12"><path d="M2.5 5.5l2.5 3 4.5-6.5" fill="none" stroke="#000" stroke-width="1.8"/></svg>
<div class="t" style="left:1287px;top:479px">Only Trigger Once</div>
<div class="i" style="left:1269px;top:511px;width:13px;height:13px;background:#f0f0f0;box-shadow:inset 1px 1px 0 #808080"></div>
<div class="t d" style="left:1287px;top:509px;font-size:13px">Alert Once Per Bar</div>
<div class="i" style="left:1269px;top:541px;width:13px;height:13px;background:#f0f0f0;box-shadow:inset 1px 1px 0 #808080"></div>
<div class="t d" style="left:1287px;top:539px;font-size:13px">Blink Once Per Bar</div>

<div class="t" style="left:1018px;top:566px">Tool Configuration for Appearance when True:</div>
<div class="i" style="left:1017px;top:586px;width:265px;height:24px"></div>
<div class="t" style="left:1021px;top:590px">LineHit</div>
<div class="c" style="left:1264px;top:588px;width:17px;height:20px"></div>
<div class="b" style="left:1095px;top:616px;width:92px;height:28px;border:2px solid;border-color:#777 #555 #555 #777;box-shadow:none;line-height:24px">OK</div>
<div class="b" style="left:1251px;top:616px;width:92px;height:28px">Cancel</div>
</body></html>
